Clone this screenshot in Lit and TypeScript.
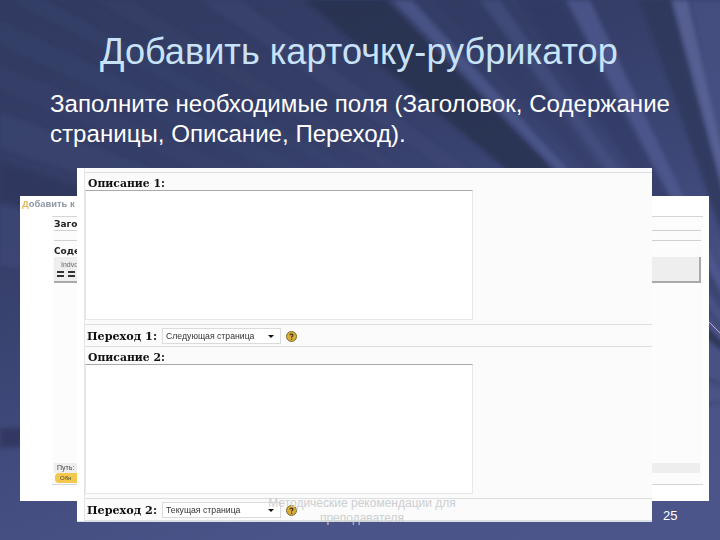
import { LitElement, html, css, svg } from "lit";
import { customElement } from "lit/decorators.js";

const CX = 780;
const CY = 400;
// Rays fan out of one point beyond the right edge: [edge, from, to, colour, opacity]
const rays: ["top" | "left", number, number, string, number][] = [
  ["top", 10, 45, "#3b4570", 0.3],
  ["top", 95, 130, "#3b4570", 0.25],
  ["top", 200, 240, "#414b79", 0.35],
  ["top", 305, 385, "#272e4c", 0.8],
  ["top", 392, 412, "#505b92", 0.7],
  ["top", 440, 470, "#2f3860", 0.4],
  ["top", 480, 500, "#4a558a", 0.5],
  ["top", 520, 560, "#2f3860", 0.45],
  ["top", 566, 590, "#525d94", 0.7],
  ["top", 640, 670, "#2d3558", 0.75],
  ["top", 672, 688, "#5f6a9e", 0.75],
  ["top", 690, 800, "#4a5488", 0.7],
  ["left", 20, 45, "#3a4470", 0.3],
  ["left", 65, 90, "#3a4470", 0.35],
  ["left", 112, 148, "#3e4875", 0.4],
  ["left", 163, 200, "#2c3456", 0.5],
  ["left", 205, 265, "#414b7b", 0.5],
  ["left", 428, 448, "#2e365c", 0.8],
];

const wedge = (e: "top" | "left", a: number, b: number) =>
  e === "top" ? `${CX},${CY} ${a},0 ${b},0` : `${CX},${CY} 0,${a} 0,${b}`;

@customElement("app-root")
export class AppRoot extends LitElement {
  static styles = css`
    :host {
      display: block;
      width: 720px;
      height: 540px;
      position: relative;
      overflow: hidden;
      background: linear-gradient(160deg, #313a61 0%, #343e67 30%, #414b7d 58%, #4b5488 80%, #4c5589 100%);
      font-family: "Liberation Sans", Arial, sans-serif;
    }
    .bg { position: absolute; inset: 0; width: 720px; height: 540px; }
    .text { position: relative; display: flex; flex-direction: column; padding: 30px 40px 0 50px; }
    h1 {
      margin: 0 0 15px;
      font-size: 36.15px;
      line-height: 44px;
      font-weight: 400;
      color: #c8e2f8;
      padding-left: 50px;
      white-space: nowrap;
    }
    p { margin: 0; font-size: 24.1px; line-height: 30px; color: #fff; white-space: nowrap; }
    .win { position: absolute; overflow: hidden; filter: blur(0.3px); }
    .back { left: 20px; top: 196px; width: 689px; height: 305px; background: #fff; }
    .back .doc {
      position: absolute;
      left: 32px; right: 6px; top: 20px; bottom: 16px;
      background: #fbfcfb;
      border-top: 1px solid #d4d6d6;
      border-bottom: 1px solid #d4d6d6;
    }
    .back .head { position: absolute; left: 2px; top: 2px; font: bold 9.4px/12px "Liberation Sans", sans-serif; color: #8a97a5; white-space: nowrap; }
    .back .head b { color: #e8b85e; }
    .doc-col { display: flex; flex-direction: column; padding: 2px 2px 0; height: 100%; box-sizing: border-box; }
    .lbl { font: bold 9px/11px "DejaVu Sans", sans-serif; color: #222; height: 11px; white-space: nowrap; }
    .rule { border-top: 1px solid #cfd1d1; }
    .rule.a { margin-bottom: 9px; }
    .rule.b { margin-bottom: 5px; }
    .tb { background: #eeeeee; border-bottom: 2px solid #aaa; border-right: 2px solid #aaa; height: 26px; display: flex; flex-direction: column; padding: 3px; box-sizing: border-box; }
    .tb small { font: 7px/9px "Liberation Sans", sans-serif; color: #666; padding-left: 4px; }
    .tb-icons { display: flex; gap: 4px; margin-top: 2px; }
    .tb-icons i { width: 7px; height: 2px; display: block; border-top: 2px solid #333; border-bottom: 2px solid #333; }
    .spacer { flex: 1; }
    .path { background: #eeeeee; height: 10px; font: 7px/10px "Liberation Sans", sans-serif; color: #444; padding-left: 3px; margin-right: 1px; }
    .yellow { width: 22px; height: 10px; margin: 0 0 1px 1px; background: #f2c94c; border-radius: 4px 0 0 4px; font: 6px/10px "Liberation Sans", sans-serif; color: #443; text-indent: 5px; white-space: nowrap; }

    .front { left: 77px; top: 168px; width: 575px; height: 354px; background: #fff; border-bottom: 1px solid #d9e0e6; box-sizing: border-box; }
    .body {
      margin-left: 7px;
      height: 100%;
      background: #fafbfa;
      border-left: 1px solid #e3e5e5;
      display: flex;
      flex-direction: column;
      box-sizing: border-box;
      padding-top: 4px;
    }
    .tline { border-top: 1px solid #dcdfdf; }
    .title { font: bold 10.8px/15px "DejaVu Serif", serif; color: #111; padding-left: 3px; margin-top: 3px; height: 14px; white-space: nowrap; }
    .ta { width: 388px; height: 130px; background: #fff; border: 1px solid #e6e8e8; border-top-color: #a9abab; box-sizing: border-box; flex: none; }
    .row { display: flex; align-items: center; height: 23px; padding: 1px 0 0 2px; gap: 3px; margin-top: 4px; border-top: 1px solid #dcdfdf; border-bottom: 1px solid #dcdfdf; box-sizing: border-box; flex: none; }
    .row .title { margin: 0; padding: 0; width: 72px; flex: none; font-size: 11.2px; height: auto; }
    .sel { width: 119px; height: 16px; background: #fff; border: 1px solid #dadcdc; box-sizing: border-box; display: flex; align-items: center; justify-content: space-between; padding: 0 6px 0 3px; font: 8.7px "Liberation Sans", sans-serif; color: #333; white-space: nowrap; }
    .sel i { width: 0; height: 0; border-left: 3px solid transparent; border-right: 3px solid transparent; border-top: 3px solid #111; }
    .help { width: 11px; height: 11px; margin-left: 2px; flex: none; display: block; }
    .foot {
      position: absolute; left: 252px; top: 496px; width: 220px;
      text-align: center; font: 12px/15px "Liberation Sans", sans-serif;
      color: #cdcfd1;
    }
    .num { position: absolute; left: 663px; top: 508px; font: 13px/16px "Liberation Sans", sans-serif; color: #fff; }
  `;

  private help() {
    return html`<svg class="help" viewBox="0 0 11 11"><circle cx="5.5" cy="5.5" r="5" fill="#d9ad3c" stroke="#7a6a30" stroke-width="1"/><path d="M4 4.2C4 2.8 7 2.8 7 4.3C7 5.3 5.5 5.2 5.5 6.6" fill="none" stroke="#3a3015" stroke-width="1.1"/><rect x="5" y="7.6" width="1.2" height="1.2" fill="#3a3015"/></svg>`;
  }

  private block(n: number, choice: string) {
    return html`
      <div class="title">Описание ${n}:</div>
      <div class="ta"></div>
      <div class="row">
        <div class="title">Переход ${n}:</div>
        <div class="sel"><span>${choice}</span><i></i></div>
        ${this.help()}
      </div>
    `;
  }

  render() {
    return html`
      <svg class="bg" viewBox="0 0 720 540">
        <defs><filter id="soft" x="-5%" y="-5%" width="110%" height="110%"><feGaussianBlur stdDeviation="2"></feGaussianBlur></filter></defs>
        <g filter="url(#soft)">
          ${rays.map(([e, a, b, c, o]) => svg`<polygon points=${wedge(e, a, b)} fill=${c} opacity=${o}></polygon>`)}
        </g>
        <line x1="708" y1="321" x2="720" y2="333" stroke="#c9a3c9" stroke-width="1"></line>
      </svg>
      <div class="text">
        <h1>Добавить карточку-рубрикатор</h1>
        <p>Заполните необходимые поля (Заголовок, Содержание<br />страницы, Описание, Переход).</p>
      </div>
      <div class="win back">
        <div class="head"><b>Д</b>обавить к</div>
        <div class="doc">
          <div class="doc-col">
            <div class="lbl">Заголовок</div>
            <div class="rule a"></div>
            <div class="rule b"></div>
            <div class="lbl">Содержание</div>
            <div class="tb">
              <small>Indvd</small>
              <div class="tb-icons"><i></i><i></i></div>
            </div>
            <div class="spacer"></div>
            <div class="path">Путь:</div>
            <div class="yellow">Обн</div>
          </div>
        </div>
      </div>
      <div class="win front">
        <div class="body">
          <div class="tline"></div>
          ${this.block(1, "Следующая страница")}
          ${this.block(2, "Текущая страница")}
        </div>
      </div>
      <div class="foot">Методические рекомендации для преподавателя</div>
      <div class="num">25</div>
    `;
  }
}
